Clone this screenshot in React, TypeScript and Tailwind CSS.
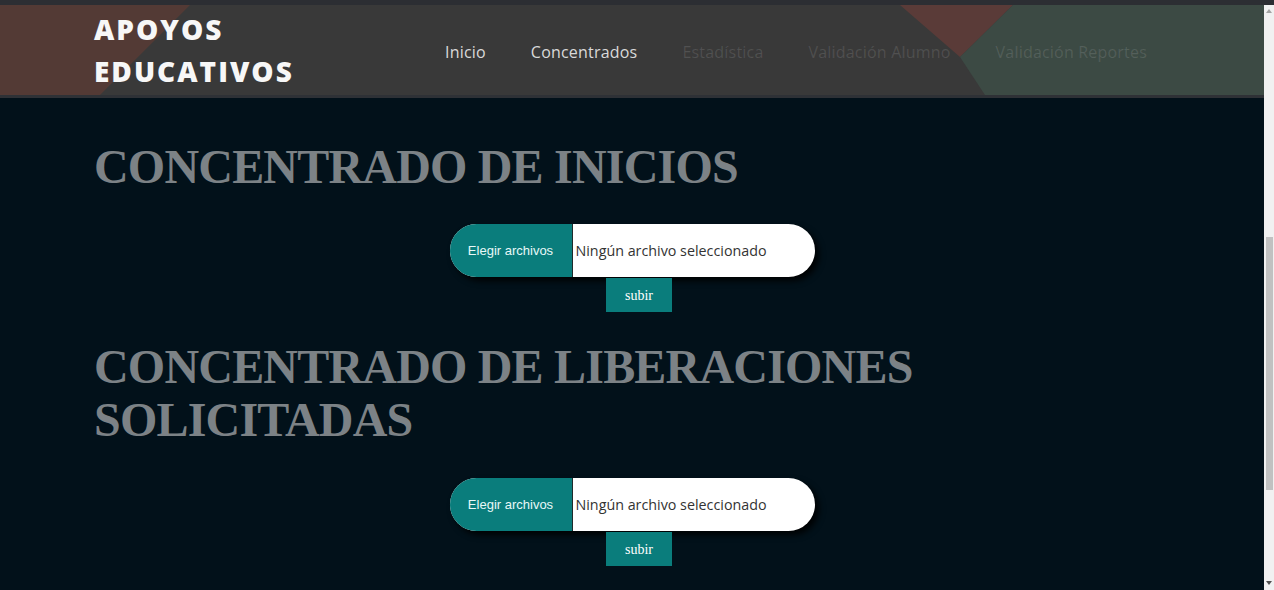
import React from "react";

const navItems = [
  { label: "Inicio", active: true },
  { label: "Concentrados", active: true },
  { label: "Estadística", active: false },
  { label: "Validación Alumno", active: false },
  { label: "Validación Reportes", active: false },
];

function HeaderBg() {
  return (
    <svg
      className="absolute inset-0 h-full w-full"
      viewBox="0 0 1264 90"
      preserveAspectRatio="none"
    >
      <rect x="0" y="0" width="1264" height="90" fill="#393939" />
      <polygon points="0,0 190,0 100,90 0,90" fill="#533a35" />
      <polygon points="900,0 1013,0 960,52" fill="#5a3b38" />
      <polygon points="1013,0 1264,0 1264,90 985,90 960,52" fill="#3c4a44" />
    </svg>
  );
}

function Uploader() {
  return (
    <div className="flex flex-col items-center">
      <div className="flex h-[53px] w-[365px] overflow-hidden rounded-full bg-white shadow-[4px_4px_6px_rgba(0,0,0,0.9)]">
        <div className="flex w-[123px] items-center justify-center border-r border-[#1f2a2a] bg-[#0a7d7c] font-['Liberation_Sans',Arial,sans-serif] text-[13px] text-[#e8f8f8]">
          Elegir archivos
        </div>
        <div className="flex flex-1 items-center pl-[3px] font-['Open_Sans',sans-serif] text-[14.3px] text-[#333]">
          Ningún archivo seleccionado
        </div>
      </div>
      <button className="ml-[14px] mt-px flex h-[34px] w-[66px] items-center justify-center bg-[#0a7d7c] font-['Liberation_Serif',serif] text-[14px] text-white">
        subir
      </button>
    </div>
  );
}

export default function App() {
  return (
    <div className="flex h-[590px] w-[1274px] flex-col overflow-hidden bg-[#2c2e33]">
      <div className="h-[5px] shrink-0" />
      <div className="flex min-h-0 flex-1">
        <div className="flex min-w-0 flex-1 flex-col bg-[#02111a]">
          <header className="relative h-[93px] shrink-0 border-b-[3px] border-[#2e3136]">
            <HeaderBg />
            <div className="relative flex h-full items-center pl-[94px]">
              <div className="w-[351px] font-['Open_Sans',sans-serif] text-[28px] font-extrabold leading-[42px] tracking-[2px] text-[#f7f7f7]">
                <div>APOYOS</div>
                <div>EDUCATIVOS</div>
              </div>
              <nav className="mt-[4px] flex gap-[45px] font-['Open_Sans',sans-serif] text-[16px] tracking-[0.2px]">
                {navItems.map((n) => (
                  <span
                    key={n.label}
                    className={n.active ? "text-[#d9d9d9]" : "text-[rgba(255,255,255,0.12)]"}
                  >
                    {n.label}
                  </span>
                ))}
              </nav>
            </div>
          </header>
          <main className="flex flex-col px-[94px]">
            <h1 className="mt-[42px] font-['Liberation_Serif',serif] text-[48px] font-bold leading-[53px] tracking-[-0.8px] text-[#7c8286]">
              CONCENTRADO DE INICIOS
            </h1>
            <div className="mt-[31px]">
              <Uploader />
            </div>
            <h1 className="mt-[28px] font-['Liberation_Serif',serif] text-[48px] font-bold leading-[53px] tracking-[-0.8px] text-[#7c8286]">
              CONCENTRADO DE LIBERACIONES
              <br />
              SOLICITADAS
            </h1>
            <div className="mt-[32px]">
              <Uploader />
            </div>
          </main>
        </div>
        <div className="relative flex w-[10px] shrink-0 flex-col items-center bg-[#f1f1f1]">
          <svg className="mt-[3px]" width="8" height="6" viewBox="0 0 8 6">
            <polygon points="4,1 7,5 1,5" fill="#a3a3a3" />
          </svg>
          <div className="mt-[223px] h-[253px] w-[7px] bg-[#c1c1c1]" />
          <div className="flex-1" />
          <svg className="mb-[4px]" width="8" height="6" viewBox="0 0 8 6">
            <polygon points="1,1 7,1 4,5" fill="#505050" />
          </svg>
        </div>
      </div>
    </div>
  );
}
